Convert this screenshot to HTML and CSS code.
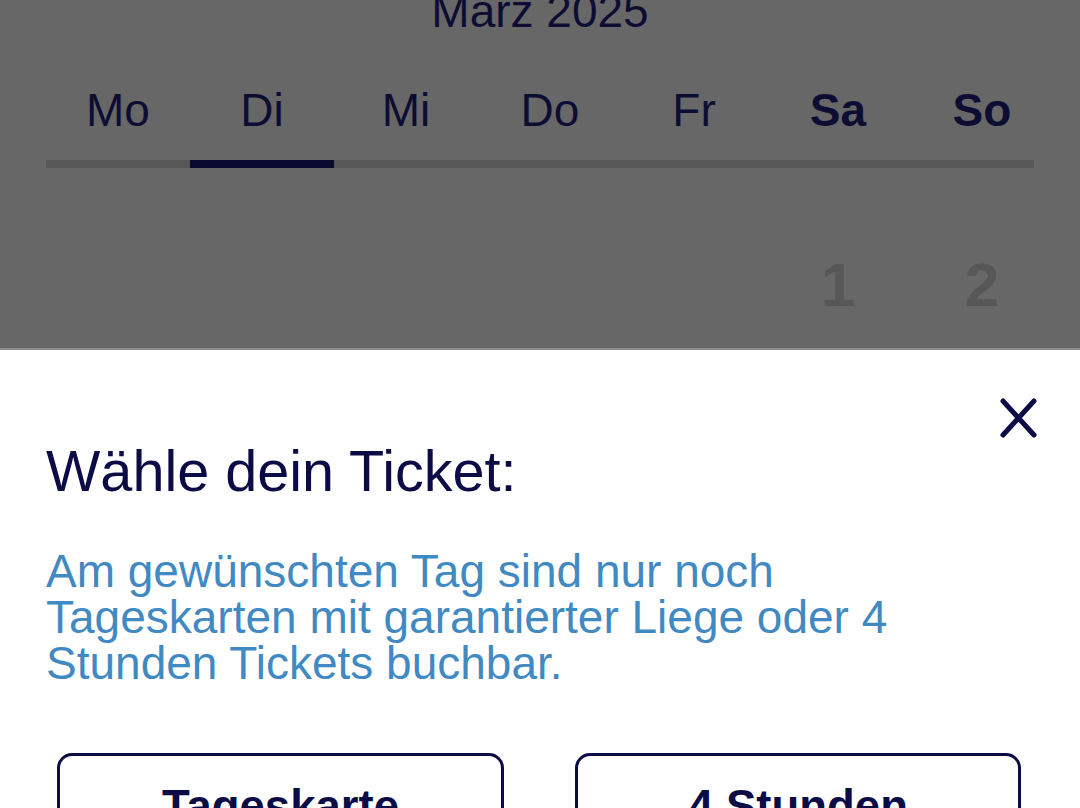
FILE: index.html
```html
<!DOCTYPE html>
<html lang="de">
<head>
<meta charset="utf-8">
<title>Ticket wählen</title>
<link rel="stylesheet" href="styles.css">
</head>
<body>
<div class="screen">
  <section class="calendar">
    <div class="month">Marz 2025</div>
    <div class="weekdays">
      <span>Mo</span><span>Di</span><span>Mi</span><span>Do</span><span>Fr</span><span class="weekend">Sa</span><span class="weekend">So</span>
    </div>
    <div class="track"><div class="track-active"></div></div>
    <div class="days">
      <span></span><span></span><span></span><span></span><span></span><span>1</span><span>2</span>
    </div>
  </section>
  <section class="sheet">
    <div class="sheet-head">
      <svg class="close" width="40" height="40" viewBox="0 0 40 40" aria-label="Schließen">
        <path d="M5 3 L36 37 M36 3 L5 37" stroke="#0b0b46" stroke-width="5" stroke-linecap="round" fill="none"/>
      </svg>
    </div>
    <h1 class="title">Wähle dein Ticket:</h1>
    <p class="info">Am gewünschten Tag sind nur noch Tageskarten mit garantierter Liege oder 4 Stunden Tickets buchbar.</p>
    <div class="options">
      <button class="option">Tageskarte</button>
      <button class="option">4 Stunden</button>
    </div>
  </section>
</div>
</body>
</html>
```

FILE: styles.css
```css
html, body {
  margin: 0;
  padding: 0;
}
body {
  width: 1080px;
  height: 808px;
  overflow: hidden;
  font-family: "Liberation Sans", Arial, sans-serif;
  background: #ffffff;
}
.screen {
  display: flex;
  flex-direction: column;
  height: 808px;
}
.calendar {
  height: 348px;
  flex: 0 0 348px;
  background: #676767;
  border-bottom: 2px solid #8e8e8e;
  overflow: hidden;
  padding: 0 0 0 46px;
  box-sizing: content-box;
}
.month {
  margin-top: -12px;
  font-size: 46px;
  line-height: 46px;
  color: #0d0d33;
  text-align: center;
  width: 988px;
}
.weekdays,
.days {
  display: grid;
  grid-template-columns: repeat(7, 144px);
}
.weekdays {
  margin-top: 53px;
  font-size: 46px;
  line-height: 46px;
  color: #0d0d33;
}
.weekdays span,
.days span {
  text-align: center;
}
.weekdays .weekend {
  font-weight: bold;
}
.track {
  margin-top: 27px;
  width: 988px;
  height: 8px;
  background: #575757;
}
.track-active {
  margin-left: 144px;
  width: 144px;
  height: 8px;
  background: #0a0a30;
}
.days {
  margin-top: 86px;
  font-size: 62px;
  line-height: 62px;
  font-weight: bold;
  color: #575757;
}
.sheet {
  flex: 1;
  background: #ffffff;
  padding: 0 46px;
}
.sheet-head {
  display: flex;
  justify-content: flex-end;
  margin-top: 48px;
  margin-right: -4px;
  height: 40px;
}
.close {
  display: block;
}
.title {
  margin: 5px 0 0 0;
  font-size: 57.6px;
  line-height: 57px;
  font-weight: normal;
  color: #0b0b46;
}
.info {
  margin: 48px 0 0 0;
  width: 975px;
  font-size: 46px;
  line-height: 46px;
  color: #4189c3;
}
.options {
  display: grid;
  grid-template-columns: 447px 446px;
  column-gap: 71px;
  margin: 67px 0 0 11px;
}
.option {
  font-family: "Liberation Sans", Arial, sans-serif;
  font-size: 45.5px;
  font-weight: bold;
  color: #0b0b46;
  background: #ffffff;
  border: 3px solid #0b0b46;
  border-radius: 15px;
  padding: 25px 10px 23px;
  text-align: center;
}
```
